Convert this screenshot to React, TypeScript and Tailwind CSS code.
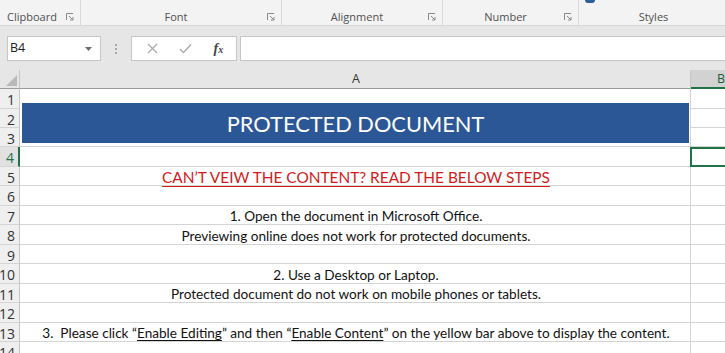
import React from "react";

const ui = { fontFamily: '"Open Sans", "Noto Sans", sans-serif' };
const cell = { fontFamily: 'Lato, "Open Sans", sans-serif' };

const Launcher = () => (
  <svg width="8" height="8" viewBox="0 0 8 8" className="shrink-0">
    <path d="M0.5 7V0.5H7" fill="none" stroke="#8a8a8a" strokeWidth="1" />
    <path d="M3 3L7 7M7 4V7H4" fill="none" stroke="#8a8a8a" strokeWidth="1" />
  </svg>
);

const RibbonGroup = ({
  label,
  width,
  launcher = true,
  left = false,
  children,
}: {
  label: string;
  width: number;
  launcher?: boolean;
  left?: boolean;
  children?: React.ReactNode;
}) => (
  <div
    className="relative flex h-full shrink-0 items-end border-r border-[#d9d9d9] pb-[1px]"
    style={{ width }}
  >
    {children}
    <div className={`flex w-full items-center ${left ? "pl-[7px]" : "justify-center pr-[10px]"}`}>
      <span className="text-[11px] leading-[14px] text-[#505050]">{label}</span>
    </div>
    {launcher && (
      <div className="absolute bottom-[4px] right-[6px]">
        <Launcher />
      </div>
    )}
  </div>
);

const RowHead = ({
  n,
  h,
  active = false,
}: {
  n: number;
  h: number;
  active?: boolean;
}) => (
  <div
    className={`flex w-[20px] shrink-0 items-center justify-end overflow-hidden border-b border-[#d4d4d4] pr-[4px] pt-[3px] text-[14px] leading-none ${
      active
        ? "border-r-2 border-r-[#217346] bg-[#e1e1e1] text-[#217346]"
        : "border-r border-r-[#c6c6c6] bg-[#efefef] text-[#333]"
    }`}
    style={{ height: h, ...ui }}
  >
    <span className="whitespace-nowrap">{n}</span>
  </div>
);

type Row = { n: number; h: number; content?: React.ReactNode };

const U = ({ children }: { children: React.ReactNode }) => (
  <span className="underline decoration-1 underline-offset-2">{children}</span>
);

const rows: Row[] = [
  { n: 4, h: 20 },
  {
    n: 5,
    h: 19,
    content: (
      <span className="text-[15.4px] text-[#d01c1c] underline decoration-1 underline-offset-[3px]">
        CAN’T VEIW THE CONTENT? READ THE BELOW STEPS
      </span>
    ),
  },
  { n: 6, h: 20 },
  { n: 7, h: 19, content: "1. Open the document in Microsoft Office." },
  { n: 8, h: 20, content: "Previewing online does not work for protected documents." },
  { n: 9, h: 19 },
  { n: 10, h: 20, content: "2. Use a Desktop or Laptop." },
  { n: 11, h: 19, content: "Protected document do not work on mobile phones or tablets." },
  { n: 12, h: 20 },
  {
    n: 13,
    h: 19,
    content: (
      <span>
        3.&nbsp; Please click “<U>Enable Editing</U>” and then “<U>Enable Content</U>” on the
        yellow bar above to display the content.
      </span>
    ),
  },
  { n: 14, h: 20 },
];

export default function App() {
  return (
    <div className="h-[353px] w-[725px] overflow-hidden bg-white" style={ui}>
      {/* Ribbon group labels */}
      <div className="flex h-[26px] border-b border-[#d5d5d5] bg-[#f3f3f3]">
        <RibbonGroup label="Clipboard" width={81} left />
        <RibbonGroup label="Font" width={201} />
        <RibbonGroup label="Alignment" width={161} />
        <RibbonGroup label="Number" width={136} />
        <RibbonGroup label="Styles" width={160} launcher={false}>
          <div className="absolute left-[6px] top-0 h-[3px] w-[10px] rounded-b-sm bg-[#2e5d9f]" />
        </RibbonGroup>
      </div>

      {/* Formula bar */}
      <div className="bg-[#e6e6e6] pb-[9px] pt-[10px]">
        <div className="flex h-[25px] items-stretch">
          <div className="ml-[7px] flex w-[94px] items-center justify-between border border-[#c6c6c6] bg-white pl-[2px] pr-[8px]">
            <span className="text-[12.5px] text-[#222]">B4</span>
            <svg width="7" height="4" viewBox="0 0 7 4">
              <path d="M0 0H7L3.5 4Z" fill="#6d6d6d" />
            </svg>
          </div>
          <div className="flex w-[30px] flex-col items-center justify-center gap-[2px]">
            <div className="h-[2px] w-[2px] bg-[#a8a8a8]" />
            <div className="h-[2px] w-[2px] bg-[#a8a8a8]" />
            <div className="h-[2px] w-[2px] bg-[#a8a8a8]" />
          </div>
          <div className="flex w-[106px] items-center justify-around border border-[#c6c6c6] bg-white pl-[4px] pr-[2px]">
            <svg width="11" height="11" viewBox="0 0 11 11">
              <path d="M1 1L10 10M10 1L1 10" stroke="#a9a9a9" strokeWidth="1.2" />
            </svg>
            <svg width="13" height="11" viewBox="0 0 13 11">
              <path d="M1 6L4.5 9.5L12 1.5" fill="none" stroke="#a9a9a9" strokeWidth="1.4" />
            </svg>
            <span
              className="text-[14px] font-bold italic text-[#444]"
              style={{ fontFamily: '"Liberation Serif", serif' }}
            >
              f<span className="text-[10px]">x</span>
            </span>
          </div>
          <div className="ml-[3px] flex-1 border-y border-l border-[#c6c6c6] bg-white" />
        </div>
      </div>

      {/* Column headers */}
      <div className="flex h-[19px] bg-[#e6e6e6]">
        <div className="flex w-[20px] shrink-0 items-end justify-end border-b border-r border-[#9b9b9b] border-r-[#c6c6c6] p-[2px]">
          <svg width="11" height="11" viewBox="0 0 11 11">
            <path d="M11 0V11H0Z" fill="#b9b9b9" />
          </svg>
        </div>
        <div className="flex w-[671px] shrink-0 items-center justify-center border-b border-r border-[#9b9b9b] border-r-[#c6c6c6] pl-[2px] pt-[1px] text-[12.5px] text-[#333]">
          A
        </div>
        <div className="flex w-[60px] shrink-0 items-center justify-center border-b-2 border-[#217346] bg-[#d2d2d2] pt-[1px] text-[12.5px] text-[#1e5e3a]">
          B
        </div>
      </div>

      {/* Rows 1–3 with title band */}
      <div className="flex">
        <div className="flex flex-col">
          <RowHead n={1} h={20} />
          <RowHead n={2} h={19} />
          <RowHead n={3} h={19} />
        </div>
        <div className="h-[58px] w-[671px] shrink-0 border-b border-r border-[#d4d4d4] pl-[2px] pr-[1px] pt-[14px]">
          <div
            className="flex h-[40px] items-center justify-center bg-[#2b5797] pt-[2px] text-[21.8px] text-white"
            style={cell}
          >
            PROTECTED DOCUMENT
          </div>
        </div>
        <div className="flex w-[60px] flex-col">
          <div className="h-[20px] border-b border-[#d4d4d4]" />
          <div className="h-[19px] border-b border-[#d4d4d4]" />
          <div className="h-[19px] border-b border-[#d4d4d4]" />
        </div>
      </div>

      {/* Remaining rows */}
      {rows.map((r) => (
        <div key={r.n} className="flex">
          <RowHead n={r.n} h={r.h} active={r.n === 4} />
          <div
            className="flex w-[671px] shrink-0 items-center justify-center whitespace-nowrap border-b border-r border-[#d4d4d4] pl-[2px] pt-[4px] text-[13.6px] leading-none text-[#111]"
            style={{ height: r.h, ...cell }}
          >
            {r.content}
          </div>
          <div
            className={`w-[60px] shrink-0 ${
              r.n === 4 ? "-ml-[1px] border-2 border-[#217346]" : "border-b border-[#d4d4d4]"
            }`}
            style={{ height: r.h }}
          />
        </div>
      ))}
    </div>
  );
}
